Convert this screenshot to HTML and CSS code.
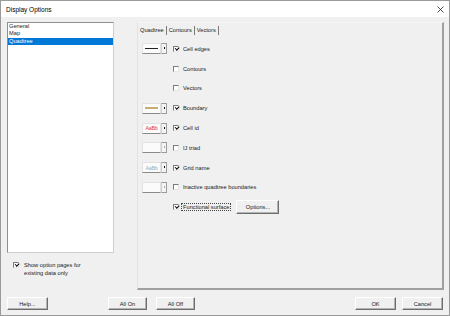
FILE: index.html
```html
<!DOCTYPE html>
<html lang="en">
<head>
	<meta charset="UTF-8">
	<title>Display Options</title>
	<link rel="stylesheet" href="styles.css">
</head>
<body>
<div class="window">
	<div class="titlebar">
		<span class="title">Display Options</span>
		<svg class="close" width="7" height="7" viewBox="0 0 7 7"><path d="M0.5 0.5 L6.5 6.5 M6.5 0.5 L0.5 6.5" stroke="#222" stroke-width="0.8"/></svg>
	</div>

	<div class="client">
		<div class="main">
			<!-- page list -->
			<div class="sidebar">
				<ul class="listbox">
					<li>General</li>
					<li>Map</li>
					<li class="selected">Quadtree</li>
				</ul>
				<div class="show-pages">
					<span class="check on"></span>
					<span class="show-label">Show option pages for<br>existing data only</span>
				</div>
			</div>

			<!-- tab page -->
			<div class="frame">
				<div class="tabs">
					<span class="tab active">Quadtree</span>
					<span class="tab">Contours</span>
					<span class="tab">Vectors</span>
				</div>

				<div class="rows">
					<div class="row">
						<div class="swatch"><span class="face"><i class="line black"></i></span><span class="arrow"></span></div>
						<span class="check on"></span><span class="label">Cell edges</span>
					</div>
					<div class="row">
						<div class="slot"></div>
						<span class="check"></span><span class="label">Contours</span>
					</div>
					<div class="row">
						<div class="slot"></div>
						<span class="check"></span><span class="label">Vectors</span>
					</div>
					<div class="row">
						<div class="swatch"><span class="face"><i class="line tan"></i></span><span class="arrow"></span></div>
						<span class="check on"></span><span class="label">Boundary</span>
					</div>
					<div class="row">
						<div class="swatch"><span class="face sample red">AaBb</span><span class="arrow"></span></div>
						<span class="check on"></span><span class="label">Cell id</span>
					</div>
					<div class="row">
						<div class="swatch disabled"><span class="face"></span><span class="arrow"></span></div>
						<span class="check"></span><span class="label">IJ triad</span>
					</div>
					<div class="row">
						<div class="swatch"><span class="face sample slate">AaBb</span><span class="arrow"></span></div>
						<span class="check on"></span><span class="label">Grid name</span>
					</div>
					<div class="row">
						<div class="swatch disabled"><span class="face"></span><span class="arrow"></span></div>
						<span class="check"></span><span class="label">Inactive quadtree boundaries</span>
					</div>
					<div class="row">
						<div class="slot"></div>
						<span class="check on"></span><span class="label focus">Functional surface</span>
						<button class="btn options">Options...</button>
					</div>
				</div>
			</div>
		</div>

		<div class="buttons">
			<button class="btn help">Help...</button>
			<button class="btn all-on">All On</button>
			<button class="btn all-off">All Off</button>
			<span class="spacer"></span>
			<button class="btn">OK</button>
			<button class="btn cancel">Cancel</button>
		</div>
	</div>
</div>
</body>
</html>
```

FILE: styles.css
```css
:root {
    --face: #f0f0f0;
    --shadow: #a0a0a0;
    --dark: #6d6d6d;
    --select: #0078d7;
    --text: #1a1a1a;
}

* {
    margin: 0;
    padding: 0;
    box-sizing: border-box;
}

body {
    font-family: 'Liberation Sans', Arial, sans-serif;
    font-size: 5.7px;
    color: var(--text);
    background: #fff;
}

.window {
    width: 450px;
    height: 316px;
    border: 1px solid #9a9a9a;
    display: flex;
    flex-direction: column;
    background: var(--face);
}

.titlebar {
    height: 16px;
    background: #fff;
    display: flex;
    align-items: center;
    justify-content: space-between;
    padding: 0 5px 0 5px;
}

.title {
    font-size: 6.5px;
    color: #000;
}

.client {
    flex: 1;
    padding: 5px 5px 0 6px;
    display: flex;
    flex-direction: column;
}

.main {
    display: flex;
    height: 268px;
}

.sidebar {
    width: 107px;
    display: flex;
    flex-direction: column;
}

.listbox {
    list-style: none;
    height: 231px;
    background: #fff;
    border: 1px solid #8f8f8f;
    border-right-color: #cfcfcf;
    border-bottom-color: #cfcfcf;
    line-height: 7.3px;
}

.listbox li {
    padding-left: 1px;
    white-space: nowrap;
}

.listbox li.selected {
    background: var(--select);
    color: #fff;
}

.show-pages {
    display: flex;
    align-items: flex-start;
    margin-top: 8px;
    padding-left: 6px;
    line-height: 8px;
}

.show-pages .check {
    margin-top: 1px;
}

.show-label {
    margin-left: 5px;
}

/* check box */
.check {
    flex: none;
    width: 6px;
    height: 6px;
    background: #fff;
    border: 1px solid #7a7a7a;
    border-right-color: #e6e6e6;
    border-bottom-color: #e6e6e6;
    position: relative;
}

.check.on::after {
    content: '';
    position: absolute;
    left: 0.5px;
    top: 0;
    width: 2.5px;
    height: 1.5px;
    border-left: 1.2px solid #000;
    border-bottom: 1.2px solid #000;
    transform: rotate(-45deg);
}

.row .check {
    margin-left: 6px;
}

.frame {
    flex: 1;
    margin-left: 23px;
    border-top: 1px solid #f6f6f6;
    border-left: 1px solid #e2e2e2;
    border-right: 2px solid var(--shadow);
    border-bottom: 2px solid var(--shadow);
    padding: 2px 0 0 2px;
}

.tabs {
    display: flex;
    height: 11px;
    align-items: center;
}

.tab {
    padding: 0 2px 0 2px;
    border-right: 1px solid #7a7a7a;
    line-height: 9px;
}

.tab.active {
    padding-left: 0;
}

.rows {
    margin: 3px 0 0 2px;
}

.row {
    height: 19.8px;
    display: flex;
    align-items: center;
}

.slot {
    width: 25px;
    height: 11px;
}

.swatch {
    display: flex;
    width: 25px;
    height: 11px;
}

.face {
    width: 19px;
    height: 11px;
    background: #fbfbfb;
    border: 1px solid #e2e2e2;
    border-bottom-color: #8a8a8a;
    display: flex;
    align-items: center;
    justify-content: center;
}

.line {
    display: block;
    width: 13px;
    height: 1px;
}

.line.black {
    background: #222;
}

.line.tan {
    height: 2px;
    background: #c9ad6e;
}

.sample {
    font-size: 5.3px;
    letter-spacing: -0.2px;
}

.sample.red {
    color: #e8333a;
}

.sample.slate {
    color: #8fb0bf;
}

.arrow {
    width: 6px;
    height: 11px;
    background: #f4f4f4;
    border: 1px solid #9c9c9c;
    border-left-color: #d0d0d0;
    position: relative;
}

.arrow::after {
    content: '';
    position: absolute;
    left: 1.5px;
    top: 3px;
    width: 1px;
    height: 2px;
    background: #111;
}

.swatch.disabled .arrow::after {
    background: #a8a8a8;
}

.check + .label {
    margin-left: 4px;
    white-space: nowrap;
}

.label.focus {
    outline: 1px dotted #444;
    outline-offset: 0;
    padding: 0 1px;
    margin-left: 3px;
}

.btn {
    font-family: inherit;
    font-size: 5.7px;
    color: var(--text);
    width: 41px;
    height: 13px;
    background: var(--face);
    border: 1px solid #fff;
    border-right-color: var(--dark);
    border-bottom-color: var(--dark);
    box-shadow: inset -1px -1px 0 #b4b4b4;
}

.options {
    width: 43px;
    height: 14px;
    margin-left: 6px;
}

.buttons {
    display: flex;
    margin-top: 7px;
    padding-right: 1px;
}

.all-on {
    width: 39px;
    margin-left: 60px;
}

.all-off {
    width: 39px;
    margin-left: 9px;
}

.spacer {
    flex: 1;
}

.cancel {
    margin-left: 6px;
}
```
